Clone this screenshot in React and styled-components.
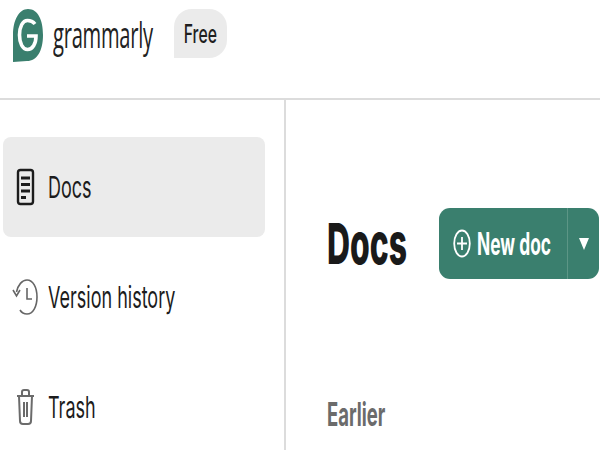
import React from "react";
import styled, { createGlobalStyle } from "styled-components";

const GlobalStyle = createGlobalStyle`
  html, body {
    margin: 0;
    padding: 0;
    background: #fff;
    overflow: hidden;
  }
  body {
    font-family: Inter, "Liberation Sans", sans-serif;
  }
`;
const Page = styled.div`
  width: 600px;
  height: 450px;
  overflow: hidden;
  display: flex;
  flex-direction: column;
`;
const Header = styled.header`
  height: 100px;
  flex: none;
  box-sizing: border-box;
  border-bottom: 2px solid #dcdcdc;
  display: flex;
  align-items: flex-start;
  padding: 9px 0 0 13px;
`;
const Logo = styled.svg`
  width: 30px;
  height: 53px;
  flex: none;
`;
const Wordmark = styled.span`
  display: block;
  width: 100px;
  margin: 8px 0 0 10px;
  font-family: "Open Sans", sans-serif;
  font-size: 36px;
  line-height: 36px;
  letter-spacing: -0.5px;
  color: #222;
  transform: scaleX(0.56);
  transform-origin: left center;
  white-space: nowrap;
`;
const Plan = styled.div`
  width: 53px;
  height: 49px;
  margin-left: 21px;
  background: #ebebeb;
  border-radius: 18px 18px 18px 0;
  display: flex;
  align-items: center;
  justify-content: center;
`;
const PlanLabel = styled.span`
  font-size: 25px;
  font-weight: 500;
  color: #1f1f1f;
  transform: scaleX(0.63);
`;
const Body = styled.div`
  flex: 1;
  display: flex;
  min-height: 0;
`;
const Sidebar = styled.nav`
  width: 286px;
  flex: none;
  box-sizing: border-box;
  border-right: 2px solid #dcdcdc;
  padding: 37px 19px 0 3px;
  display: flex;
  flex-direction: column;
  gap: 10px;
`;
const NavItem = styled.div`
  height: 100px;
  flex: none;
  display: flex;
  align-items: center;
  gap: 11px;
  padding-left: 10px;
  border-radius: 8px;
  background: ${(props) => (props.$active ? "#ebebeb" : "transparent")};
`;
const NavIcon = styled.svg`
  width: 24px;
  height: 36px;
  flex: none;
  overflow: visible;
`;
const NavLabel = styled.span`
  font-size: 30px;
  line-height: 36px;
  color: #1c1c1c;
  transform: scaleX(0.6);
  transform-origin: left center;
  white-space: nowrap;
`;
const Main = styled.main`
  flex: 1;
  display: flex;
  flex-direction: column;
  padding: 108px 0 0 41px;
`;
const TitleRow = styled.div`
  display: flex;
  align-items: center;
`;
const Title = styled.h1`
  width: 112px;
  margin: 0;
  font-size: 57px;
  line-height: 71px;
  font-weight: 800;
  color: #1a1a1a;
  transform: scaleX(0.56);
  transform-origin: left center;
  white-space: nowrap;
`;
const SplitButton = styled.div`
  width: 160px;
  height: 71px;
  display: flex;
  background: #3a7f6e;
  border-radius: 11px;
  color: #fff;
`;
const MainAction = styled.div`
  width: 129px;
  box-sizing: border-box;
  display: flex;
  align-items: center;
  gap: 6px;
  padding-left: 14px;
  border-right: 1px solid #5c9686;
`;
const PlusIcon = styled.svg`
  width: 18px;
  height: 29px;
  flex: none;
`;
const ActionLabel = styled.span`
  font-size: 31px;
  font-weight: 700;
  transform: scaleX(0.56);
  transform-origin: left center;
  white-space: nowrap;
`;
const Caret = styled.div`
  flex: 1;
  display: flex;
  align-items: center;
  justify-content: center;
`;
const CaretShape = styled.div`
  width: 0;
  height: 0;
  border-left: 5px solid transparent;
  border-right: 5px solid transparent;
  border-top: 12px solid #fff;
`;
const Section = styled.h2`
  margin: 117px 0 0;
  font-size: 33px;
  line-height: 36px;
  font-weight: 700;
  color: #6b6b6b;
  transform: scaleX(0.56);
  transform-origin: left center;
`;

const DocsIcon = () => (
  <NavIcon viewBox="0 0 24 36" fill="none" stroke="#1c1c1c" strokeWidth="2.4">
    <rect x="5" y="1" width="15" height="34" rx="2.5" />
    <path d="M8 9h9M8 15.500h9M8 22h9M8 28.500h5" strokeWidth="2.800" />
  </NavIcon>
);

const HistoryIcon = () => (
  <NavIcon viewBox="0 0 24 36" fill="none" stroke="#666" strokeWidth="1.6">
    <path d="M3.500 13C5 6 9 1 14 1c6 0 10 7.500 10 17s-4 17-10 17c-3 0-5.500-1.500-7-4" />
    <path d="M0 11l3.500 6L7 11" />
    <path d="M14 9v11h5" />
  </NavIcon>
);

const TrashIcon = () => (
  <NavIcon viewBox="0 0 24 36" fill="none" stroke="#6b6b6b" strokeWidth="2">
    <path d="M4 7h17M9 7V3a2 2 0 0 1 2-2h3a2 2 0 0 1 2 2v4" />
    <path d="M6 7l1 25a3 3 0 0 0 3 3h5a3 3 0 0 0 3-3l1-25" />
    <path d="M11 13v15M14 13v15" />
  </NavIcon>
);

const App = () => {
  return (
    <Page>
      <GlobalStyle />
      <Header>
        <Logo viewBox="0 0 30 53">
          <path
            d="M15 0C25 0 30 11 30 26 30 42 24 52 14 52L0 53V26C0 11 6 0 15 0z"
            fill="#3a7f6e"
          />
          <path
            d="M22 15C20 12.500 17.500 11.500 14.500 11.500 9.500 11.500 6.500 18 6.500 26 6.500 34 9.500 40.500 14.500 40.500 19.500 40.500 23 35 23 27H14"
            fill="none"
            stroke="#fff"
            strokeWidth="3.600"
          />
        </Logo>
        <Wordmark>grammarly</Wordmark>
        <Plan>
          <PlanLabel>Free</PlanLabel>
        </Plan>
      </Header>
      <Body>
        <Sidebar>
          <NavItem $active>
            <DocsIcon />
            <NavLabel>Docs</NavLabel>
          </NavItem>
          <NavItem>
            <HistoryIcon />
            <NavLabel>Version history</NavLabel>
          </NavItem>
          <NavItem>
            <TrashIcon />
            <NavLabel>Trash</NavLabel>
          </NavItem>
        </Sidebar>
        <Main>
          <TitleRow>
            <Title>Docs</Title>
            <SplitButton>
              <MainAction>
                <PlusIcon viewBox="0 0 18 29" fill="none" stroke="#fff" strokeWidth="1.800">
                  <ellipse cx="9" cy="14.500" rx="7.800" ry="13" />
                  <path d="M9 8v13M4 14.500h10" />
                </PlusIcon>
                <ActionLabel>New doc</ActionLabel>
              </MainAction>
              <Caret>
                <CaretShape />
              </Caret>
            </SplitButton>
          </TitleRow>
          <Section>Earlier</Section>
        </Main>
      </Body>
    </Page>
  );
};

export default App;
